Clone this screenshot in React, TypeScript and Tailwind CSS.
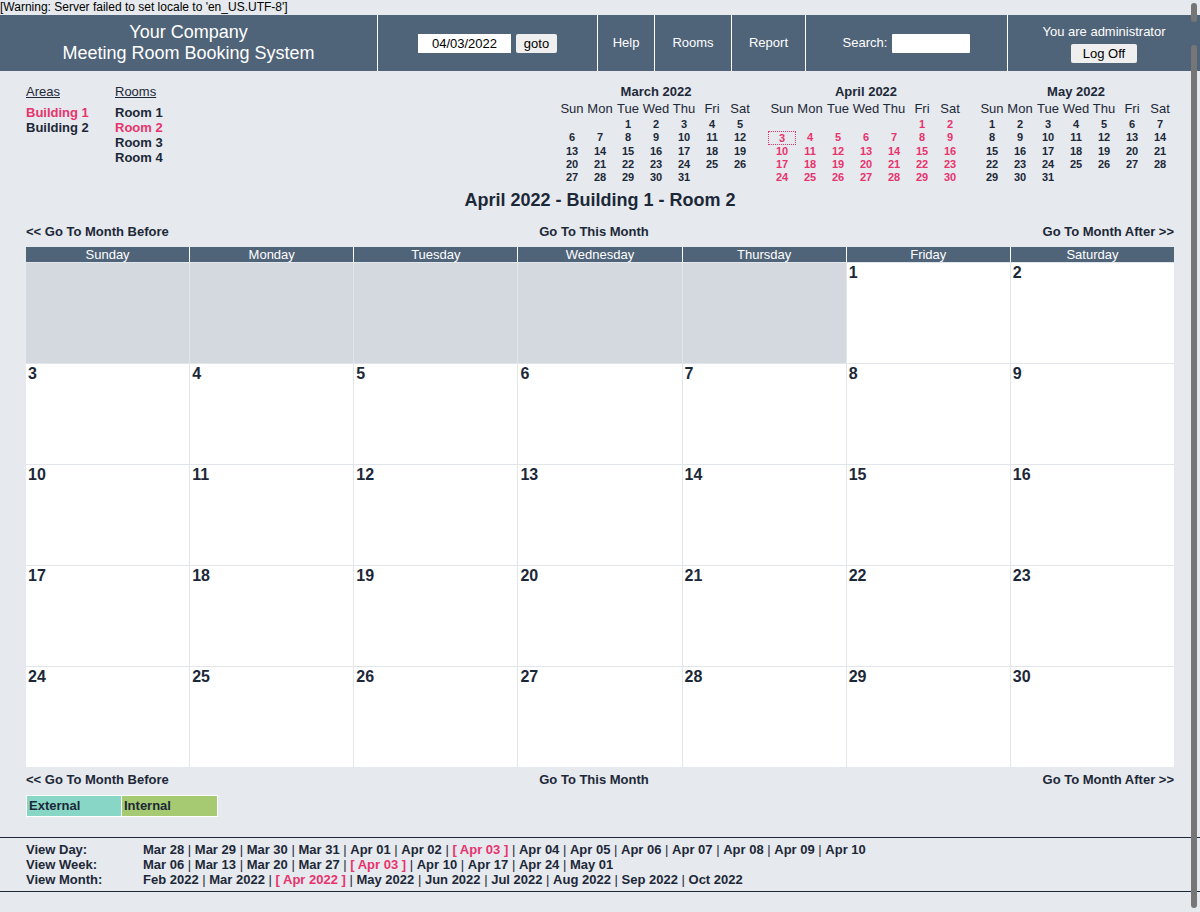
import * as React from "react"

interface MiniMonth {
  title: string;
  start: number;
  days: number;
  active: boolean;
}

const miniMonths: MiniMonth[] = [
  { title: "March 2022", start: 2, days: 31, active: false },
  { title: "April 2022", start: 5, days: 30, active: true },
  { title: "May 2022", start: 0, days: 31, active: false },
]

const dayNames = ["Sun", "Mon", "Tue", "Wed", "Thu", "Fri", "Sat"]
const weekDays = ["Sunday", "Monday", "Tuesday", "Wednesday", "Thursday", "Friday", "Saturday"]

const viewRows = [
  {
    label: "View Day:",
    items: ["Mar 28", "Mar 29", "Mar 30", "Mar 31", "Apr 01", "Apr 02", "[ Apr 03 ]", "Apr 04", "Apr 05", "Apr 06", "Apr 07", "Apr 08", "Apr 09", "Apr 10"],
  },
  {
    label: "View Week:",
    items: ["Mar 06", "Mar 13", "Mar 20", "Mar 27", "[ Apr 03 ]", "Apr 10", "Apr 17", "Apr 24", "May 01"],
  },
  {
    label: "View Month:",
    items: ["Feb 2022", "Mar 2022", "[ Apr 2022 ]", "May 2022", "Jun 2022", "Jul 2022", "Aug 2022", "Sep 2022", "Oct 2022"],
  },
]

function MiniCalendar({ month }: { month: MiniMonth }) {
  const cells: (number | null)[] = []
  for (let i = 0; i < month.start; i++) cells.push(null)
  for (let d = 1; d <= month.days; d++) cells.push(d)

  return (
    <div className="w-[196px]">
      <div className="text-center text-[13px] leading-[16px] font-bold">{month.title}</div>
      <div className="grid grid-cols-7">
        {dayNames.map((n) => (
          <div key={n} className="text-center text-[13px] leading-[18px]">{n}</div>
        ))}
        {cells.map((d, i) => (
          <div
            key={i}
            className={
              "text-center text-[11px] font-bold h-[13.25px] leading-[13.25px] " +
              (month.active ? "text-[#e8336d] " : "") +
              (month.active && d === 3 ? "border border-dotted border-[#e8336d] leading-[11.25px]" : "")
            }
          >
            {d ?? ""}
          </div>
        ))}
      </div>
    </div>
  )
}

function MonthNav() {
  return (
    <div className="flex justify-between text-[13px] leading-[16px] font-bold">
      <span className="w-[288px]">&lt;&lt; Go To Month Before</span>
      <span>Go To This Month</span>
      <span className="w-[300px] text-right">Go To Month After &gt;&gt;</span>
    </div>
  )
}

export default function App() {
  const cells: (number | null)[] = []
  for (let i = 0; i < 5; i++) cells.push(null)
  for (let d = 1; d <= 30; d++) cells.push(d)

  return (
    <div className="relative h-[912px] overflow-hidden bg-[#e6e9ed] text-[#1c2838] font-['Liberation_Sans',Arial,sans-serif]">
      <div className="text-[12px] leading-[15px] text-black">[Warning: Server failed to set locale to 'en_US.UTF-8']</div>

      {/* header bar */}
      <div className="flex h-[56px] bg-[#506479] text-white text-[13px]">
        <div className="w-[377px] flex flex-col items-center justify-center text-[18px] leading-[21px]">
          <div>Your Company</div>
          <div>Meeting Room Booking System</div>
        </div>
        <div className="w-[220px] border-l border-white flex items-center justify-center gap-[5px]">
          <div className="w-[93px] h-[19px] bg-white text-black text-center leading-[19px]">04/03/2022</div>
          <div className="w-[41px] h-[19px] bg-[#efefef] text-black text-center leading-[19px] rounded-[2px]">goto</div>
        </div>
        <div className="w-[57px] border-l border-white flex items-center justify-center">Help</div>
        <div className="w-[77px] border-l border-white flex items-center justify-center">Rooms</div>
        <div className="w-[74px] border-l border-white flex items-center justify-center">Report</div>
        <div className="w-[202px] border-l border-white flex items-center justify-center gap-[5px]">
          <span>Search:</span>
          <div className="w-[78px] h-[19px] bg-white rounded-[1px]" />
        </div>
        <div className="flex-1 border-l border-white flex flex-col items-center justify-center gap-[5px]">
          <div className="leading-[15px]">You are administrator</div>
          <div className="w-[66px] h-[19px] bg-[#efefef] text-black text-center leading-[19px] text-[13px] rounded-[2px]">Log Off</div>
        </div>
      </div>

      <div className="px-[26px]">
        {/* areas, rooms and mini calendars */}
        <div className="flex justify-between pt-[13px]">
          <div className="flex">
            <div className="w-[89px]">
              <div className="text-[13px] leading-[16px] underline">Areas</div>
              <div className="mt-[5px] text-[13px] leading-[15px] font-bold">
                <div className="text-[#e8336d]">Building 1</div>
                <div>Building 2</div>
              </div>
            </div>
            <div>
              <div className="text-[13px] leading-[16px] underline">Rooms</div>
              <div className="mt-[5px] text-[13px] leading-[15px] font-bold">
                <div>Room 1</div>
                <div className="text-[#e8336d]">Room 2</div>
                <div>Room 3</div>
                <div>Room 4</div>
              </div>
            </div>
          </div>
          <div className="flex gap-[14px]">
            {miniMonths.map((m) => (
              <MiniCalendar key={m.title} month={m} />
            ))}
          </div>
        </div>

        <div className="mt-[6px] text-center text-[18px] leading-[20px] font-bold">April 2022 - Building 1 - Room 2</div>

        <div className="mt-[14px]">
          <MonthNav />
        </div>

        {/* month table */}
        <div className="mt-[7px]">
          <div className="grid grid-cols-7 gap-px bg-white">
            {weekDays.map((d) => (
              <div key={d} className="bg-[#506479] text-white text-center text-[13px] leading-[15px] h-[15px]">{d}</div>
            ))}
          </div>
          <div className="grid grid-cols-7 gap-px bg-[#e2e6ea] pt-px">
            {cells.map((d, i) => (
              <div
                key={i}
                className={"h-[100px] px-[2px] pt-[1px] text-[16px] leading-[18px] font-bold " + (d ? "bg-white" : "bg-[#d4d9e0]")}
              >
                {d ?? ""}
              </div>
            ))}
          </div>
        </div>

        <div className="mt-[5px]">
          <MonthNav />
        </div>

        <div className="mt-[7px] flex">
          <div className="w-[96px] h-[22px] bg-[#88d6c6] border border-white pl-[2px] text-[13px] leading-[20px] font-bold">External</div>
          <div className="w-[96px] h-[22px] bg-[#a5ca72] border border-white border-l-0 pl-[2px] text-[13px] leading-[20px] font-bold">Internal</div>
        </div>
      </div>

      {/* view links */}
      <div className="mt-[20px] border-t border-b border-[#1c2838] px-[26px] pt-[4px] pb-[4px]">
        {viewRows.map((row) => (
          <div key={row.label} className="flex text-[13px] leading-[15px] font-bold">
            <div className="w-[117px]">{row.label}</div>
            <div>
              {row.items.map((item, i) => (
                <React.Fragment key={item}>
                  {i > 0 && <span className="font-normal"> | </span>}
                  <span className={item.startsWith("[") ? "text-[#e8336d]" : ""}>{item}</span>
                </React.Fragment>
              ))}
            </div>
          </div>
        ))}
      </div>

      {/* overlay scrollbar */}
      <div className="absolute right-[3px] top-[3px] w-[6px] h-[19px] rounded-full bg-[#767676]" />
      <div className="absolute right-[3px] top-[45px] w-[6px] h-[863px] rounded-full bg-[#767676]" />
    </div>
  )
}
